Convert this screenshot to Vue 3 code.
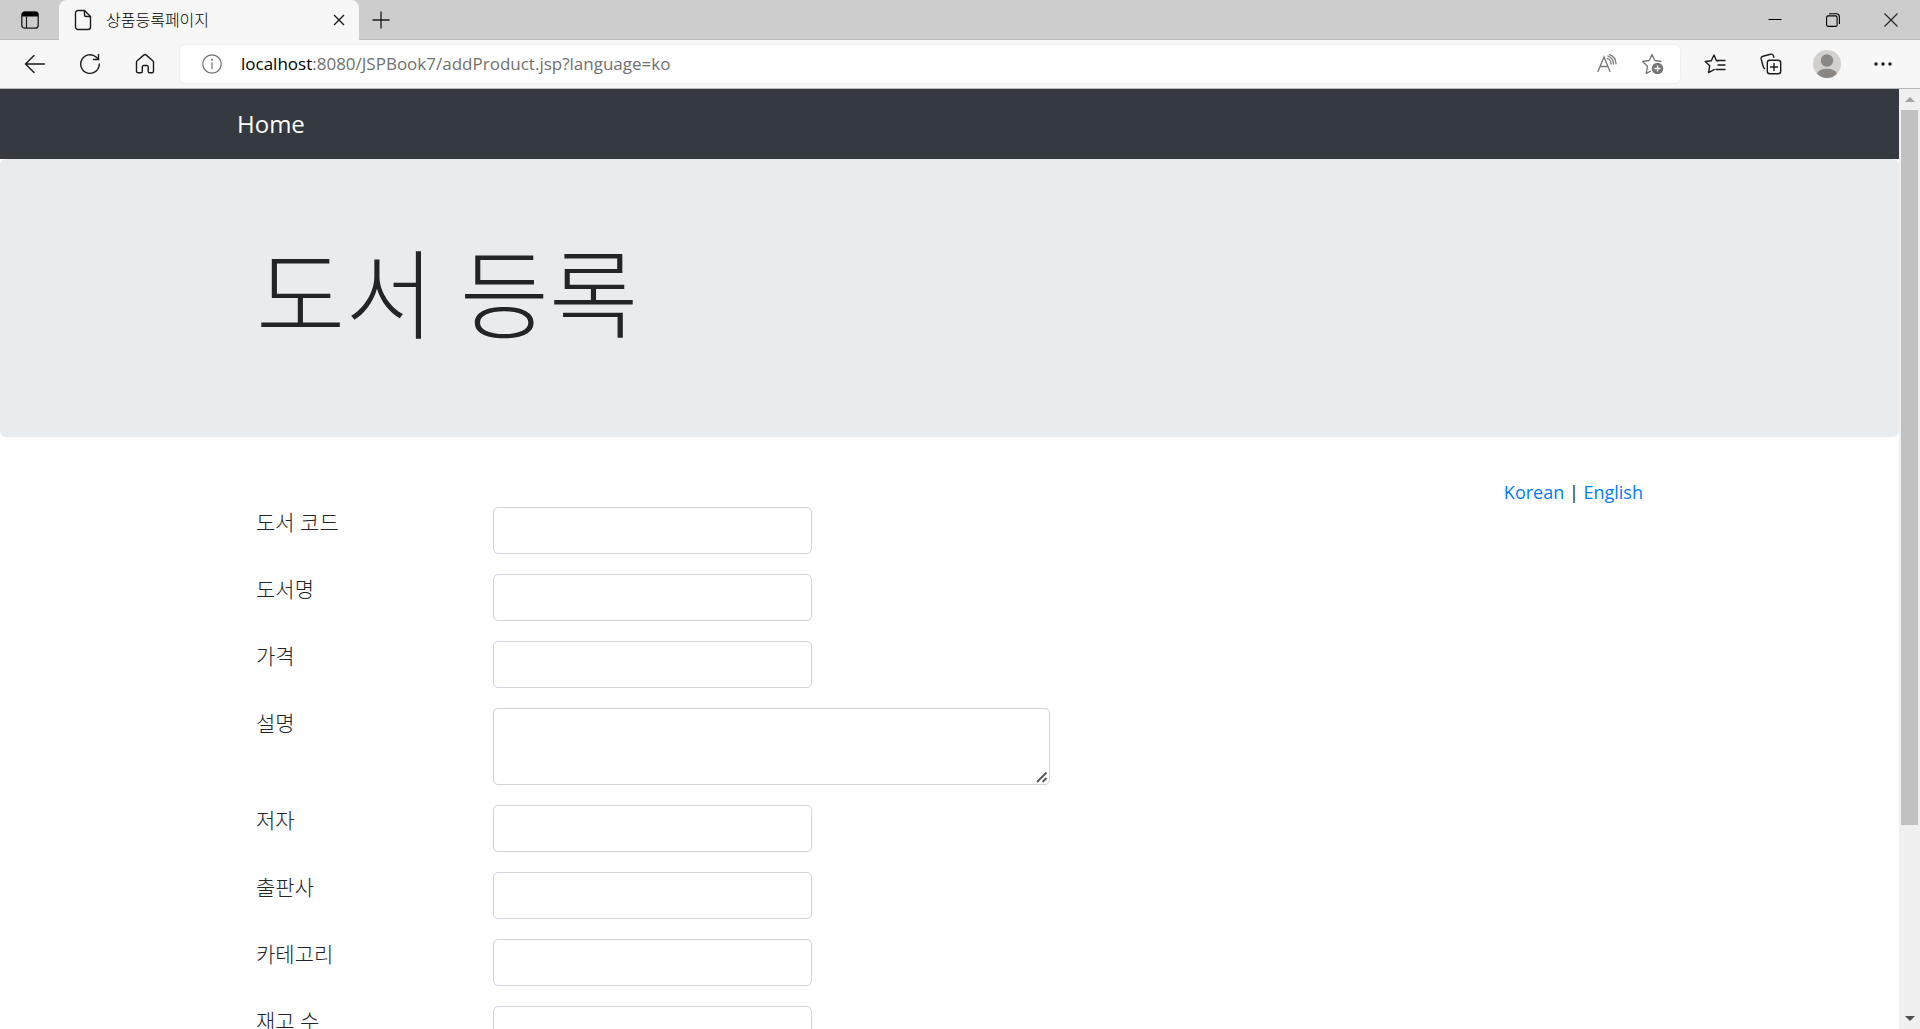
<template>
  <div class="browser">
    <header class="chrome">
      <div class="tab-strip">
        <button type="button" class="icon-btn tab-menu" aria-label="탭 작업 메뉴">
          <svg width="20" height="20" viewBox="0 0 20 20" fill="none" stroke="#1b1b1b">
            <rect x="1.8" y="2" width="16.4" height="16.2" rx="3" stroke-width="1.3" />
            <path d="M2 6.5V5a3 3 0 0 1 3-3h10a3 3 0 0 1 3 3v1.5z" fill="#000" stroke="none" />
            <path d="M6.5 6.5v11.5" stroke-width="1.2" />
          </svg>
        </button>
        <div class="tab">
          <svg width="18" height="22" viewBox="0 0 18 22" fill="none" stroke="#1b1b1b" stroke-width="1.4" stroke-linejoin="round">
            <path d="M4 1.5h6.5l6 6V18a2.500 2.500 0 0 1-2.500 2.500H4A2.500 2.500 0 0 1 1.500 18V4A2.500 2.500 0 0 1 4 1.500z" />
            <path d="M10.500 1.500V6a1.500 1.500 0 0 0 1.500 1.500h4.500" />
          </svg>
          <span class="tab-title">상품등록페이지</span>
          <button type="button" class="icon-btn tab-close" aria-label="탭 닫기">
            <svg width="12" height="12" viewBox="0 0 12 12" stroke="#1b1b1b" stroke-width="1.4">
              <path d="M1 1l10 10M11 1L1 11" />
            </svg>
          </button>
        </div>
        <button type="button" class="icon-btn new-tab" aria-label="새 탭">
          <svg width="18" height="18" viewBox="0 0 18 18" stroke="#1b1b1b" stroke-width="1.3">
            <path d="M9 0.5v17M0.5 9h17" />
          </svg>
        </button>
        <div class="window-controls">
          <button type="button" class="icon-btn" aria-label="최소화">
            <svg width="14" height="14" viewBox="0 0 14 14" stroke="#000">
              <path d="M0.5 6.5h13" />
            </svg>
          </button>
          <button type="button" class="icon-btn" aria-label="이전 크기로 복원">
            <svg width="14" height="14" viewBox="0 0 14 14" fill="none" stroke="#000" stroke-width="1.1">
              <rect x="0.6" y="2.9" width="10.5" height="10.5" rx="1.5" />
              <path d="M3 0.7h7.5a3 3 0 0 1 2.9 2.9V11" />
            </svg>
          </button>
          <button type="button" class="icon-btn" aria-label="닫기">
            <svg width="14" height="14" viewBox="0 0 14 14" stroke="#222" stroke-width="1.1">
              <path d="M0.5 0.5l13 13M13.5 0.5l-13 13" />
            </svg>
          </button>
        </div>
      </div>

      <div class="toolbar">
        <div class="nav-buttons">
          <button type="button" class="icon-btn" aria-label="뒤로">
            <svg width="22" height="20" viewBox="0 0 22 20" fill="none" stroke="#1b1b1b" stroke-width="1.4" stroke-linecap="round">
              <path d="M10 1.5L1.5 10l8.5 8.5M1.5 10h19" />
            </svg>
          </button>
          <button type="button" class="icon-btn" aria-label="새로 고침">
            <svg width="22" height="22" viewBox="0 0 22 22" fill="none" stroke="#1b1b1b" stroke-width="1.4" stroke-linecap="round">
              <path d="M20.3 11a9.3 9.3 0 1 1-2.9-6.700l2.1 2" />
              <path d="M19.5 1.5v5h-5" />
            </svg>
          </button>
          <button type="button" class="icon-btn" aria-label="홈">
            <svg width="20" height="22" viewBox="0 0 20 22" fill="none" stroke="#1b1b1b" stroke-width="1.4" stroke-linejoin="round">
              <path d="M1.5 9.3a2 2 0 0 1 .7-1.5l6.5-5.7a2 2 0 0 1 2.600 0l6.5 5.7a2 2 0 0 1 .7 1.5v8.900a1.5 1.5 0 0 1-1.5 1.5h-2.500a1.300 1.300 0 0 1-1.300-1.300v-4.600a1.300 1.300 0 0 0-1.300-1.300H8.600a1.300 1.300 0 0 0-1.300 1.300v4.600A1.300 1.300 0 0 1 6 19.700H3a1.500 1.500 0 0 1-1.500-1.500z" />
            </svg>
          </button>
        </div>

        <div class="address-bar">
          <svg width="20" height="20" viewBox="0 0 20 20" fill="none" stroke="#707070" stroke-width="1.2">
            <circle cx="10" cy="10" r="9.2" />
            <path d="M10 8.5v6.5" />
            <circle cx="10" cy="5.8" r="1" fill="#707070" stroke="none" />
          </svg>
          <span class="url"><b>localhost</b>:8080/JSPBook7/addProduct.jsp?language=ko</span>
          <button type="button" class="icon-btn" aria-label="소리내어 읽기">
            <svg width="20" height="20" viewBox="0 0 20 20" fill="none" stroke="#757575" stroke-width="1.3" stroke-linecap="round">
              <path d="M1 17.5L7 3l6 14.5M3 12.5h8" />
              <path d="M10.5 4.5a6 6 0 0 1 3.500 5.500M11 2a9 9 0 0 1 5.500 8M12.500 .7a10 10 0 0 1 6.500 9" />
            </svg>
          </button>
          <button type="button" class="icon-btn" aria-label="즐겨찾기에 추가">
            <svg width="23" height="22" viewBox="0 0 23 22" fill="none" stroke="#757575" stroke-width="1.3" stroke-linejoin="round">
              <path d="M20.5 8.5l-6.700-1L11 1.5l-2.800 6-6.700 1 5 4.800-1.300 7L10 18" />
              <circle cx="16.5" cy="15.5" r="5.8" fill="#757575" stroke="none" />
              <path d="M16.5 12.5v6M13.5 15.5h6" stroke="#fff" />
            </svg>
          </button>
        </div>

        <div class="tool-buttons">
          <button type="button" class="icon-btn" aria-label="즐겨찾기">
            <svg width="22" height="20" viewBox="0 0 22 20" fill="none" stroke="#1b1b1b" stroke-width="1.4" stroke-linejoin="round" stroke-linecap="round">
              <path d="M13.5 6.900l-1-.2L10 1 7.3 6.700 1.2 7.500l4.500 4.300-1.200 6.800 5.700-3" />
              <path d="M13.5 6.5H21M14 11h7M12 15.500h9" />
            </svg>
          </button>
          <button type="button" class="icon-btn" aria-label="컬렉션">
            <svg width="22" height="22" viewBox="0 0 22 22" fill="none" stroke="#1b1b1b" stroke-width="1.4" stroke-linecap="round">
              <rect x="7.3" y="7.3" width="13.4" height="13.4" rx="2.5" />
              <path d="M14 10.5v7M10.5 14h7" />
              <path d="M4.5 15.5A3 3 0 0 1 3.3 13.8L1.2 6.2a2.5 2.5 0 0 1 1.8-3L10.5 1.2a2.5 2.5 0 0 1 3 1.8l.3 1.2" />
            </svg>
          </button>
          <button type="button" class="icon-btn" aria-label="프로필">
            <svg width="28" height="28" viewBox="0 0 28 28">
              <circle cx="14" cy="14" r="14" fill="#d2d0ce" />
              <circle cx="14" cy="10.5" r="6.2" fill="#8a8784" />
              <path d="M4 23.7a10.5 7 0 0 1 20 0A14 14 0 0 1 4 23.7z" fill="#8a8784" />
            </svg>
          </button>
          <button type="button" class="icon-btn" aria-label="설정 및 기타">
            <svg width="18" height="4" viewBox="0 0 18 4" fill="#1b1b1b">
              <circle cx="2" cy="2" r="1.7" />
              <circle cx="9" cy="2" r="1.7" />
              <circle cx="16" cy="2" r="1.7" />
            </svg>
          </button>
        </div>
      </div>
    </header>

    <div class="viewport">
      <main class="page">
        <nav class="navbar">
          <div class="container">
            <a class="navbar-brand" href="#">Home</a>
          </div>
        </nav>

        <div class="jumbotron">
          <div class="container">
            <h1 class="display-3">도서 등록</h1>
          </div>
        </div>

        <div class="container content">
          <div class="languages">
            <a href="#ko">Korean</a> | <a href="#en">English</a>
          </div>
          <form @submit.prevent>
            <div v-for="field in fields" :key="field.id" class="form-row">
              <label :for="field.id">{{ field.label }}</label>
              <div v-if="field.multiline" class="textarea-wrap">
                <textarea :id="field.id" v-model="product[field.id]" class="form-control" rows="2"></textarea>
                <svg class="grip" width="12" height="12" viewBox="0 0 12 12" stroke="#555" stroke-width="1.8">
                  <path d="M1 11L10.500 1.500M6.500 11L10.500 7" />
                </svg>
              </div>
              <input v-else :id="field.id" v-model="product[field.id]" type="text" class="form-control" />
            </div>
          </form>
        </div>
      </main>

      <div class="scrollbar" aria-hidden="true">
        <span class="arrow up"></span>
        <div class="track"><div class="thumb"></div></div>
        <span class="arrow down"></span>
      </div>
    </div>
  </div>
</template>

<script setup>
import { reactive } from 'vue'

const fields = [
  { id: 'productId', label: '도서 코드' },
  { id: 'name', label: '도서명' },
  { id: 'unitPrice', label: '가격' },
  { id: 'description', label: '설명', multiline: true },
  { id: 'author', label: '저자' },
  { id: 'publisher', label: '출판사' },
  { id: 'category', label: '카테고리' },
  { id: 'unitsInStock', label: '재고 수' },
]

const product = reactive({
  productId: '',
  name: '',
  unitPrice: '',
  description: '',
  author: '',
  publisher: '',
  category: '',
  unitsInStock: '',
})
</script>

<style>
body {
  margin: 0;
}
</style>

<style scoped>
.browser {
  display: flex;
  flex-direction: column;
  height: 100vh;
  overflow: hidden;
  background: #fff;
  color: #212529;
  font-family: 'Open Sans', 'Noto Sans CJK KR', sans-serif;
}

.browser *,
.browser *::before,
.browser *::after {
  box-sizing: border-box;
}

svg {
  display: block;
  flex: none;
}

.icon-btn {
  display: grid;
  place-items: center;
  flex: none;
  border: 0;
  padding: 0;
  background: none;
  cursor: pointer;
}

/* browser frame */
.chrome {
  flex: none;
  background: #f7f7f7;
  border-bottom: 1px solid #b8b8b8;
}

.tab-strip {
  display: flex;
  height: 40px;
  background: #cdcdcd;
  box-shadow: inset 0 -1px #bdbdbd;
}

.tab-menu {
  width: 59px;
}

.tab {
  display: flex;
  align-items: center;
  gap: 14px;
  width: 300px;
  padding: 0 12px 0 15px;
  background: #f7f7f7;
  border-radius: 8px 8px 0 0;
}

.tab-title {
  flex: 1;
  padding-bottom: 3px;
  color: #000;
  font-family: 'Noto Sans CJK KR', sans-serif;
  font-size: 16px;
  line-height: 20px;
  font-weight: 300;
}

.tab-close {
  width: 16px;
  height: 16px;
}

.new-tab {
  width: 43px;
}

.window-controls {
  display: flex;
  margin-left: auto;
}

.window-controls .icon-btn {
  width: 58px;
}

.toolbar {
  display: flex;
  align-items: center;
  height: 48px;
}

.nav-buttons {
  display: flex;
  padding-left: 7px;
}

.nav-buttons .icon-btn {
  width: 55px;
  height: 38px;
}

.address-bar {
  display: flex;
  align-items: center;
  flex: 1;
  height: 38px;
  margin-left: 8px;
  padding: 0 14px 0 22px;
  background: #fff;
  border-radius: 5px;
  box-shadow: 0 0 2px #ddd;
}

.address-bar .icon-btn {
  width: 28px;
  height: 28px;
}

.address-bar .icon-btn + .icon-btn {
  margin-left: 17px;
}

.url {
  flex: 1;
  margin-left: 19px;
  color: #707070;
  font-size: 17px;
  line-height: 24px;
}

.url b {
  color: #000;
  font-weight: 400;
}

.tool-buttons {
  display: flex;
  padding-left: 7px;
  padding-right: 9px;
}

.tool-buttons .icon-btn {
  width: 56px;
  height: 38px;
}

/* page */
.viewport {
  display: flex;
  flex: 1;
  min-height: 0;
}

.page {
  flex: 1;
  min-width: 0;
  overflow: hidden;
  font-size: 21px;
  line-height: 30px;
}

.container {
  width: 100%;
  max-width: 1425px;
  margin: 0 auto;
  padding: 0 19px;
}

.navbar {
  padding: 10px 0;
  background: #343a40;
}

.navbar .container {
  padding: 0;
}

.navbar-brand {
  display: block;
  width: fit-content;
  padding: 6px 0;
  color: #fff;
  font-size: 24px;
  line-height: 38px;
  text-decoration: none;
}

.jumbotron {
  margin-bottom: 40px;
  padding: 80px 0;
  background: #e9ecef;
  border-radius: 6px;
}

.display-3 {
  margin: 0 0 10px;
  font-size: 97px;
  line-height: 108px;
  font-weight: 300;
}

.languages {
  font-size: 18px;
  text-align: right;
}

.languages a {
  color: #007bff;
  text-decoration: none;
}

.form-row {
  display: grid;
  grid-template-columns: 200px 319px;
  column-gap: 37px;
  align-items: start;
  margin-bottom: 20px;
}

.form-row label {
  font-weight: 300;
}

.form-control {
  display: block;
  width: 100%;
  height: 47px;
  padding: 7px 15px;
  border: 1px solid #ced4da;
  border-radius: 5px;
  background: #fff;
  color: #495057;
  font: inherit;
  outline: none;
}

.form-control:focus {
  border-color: #80bdff;
}

.form-row:has(textarea) {
  grid-template-columns: 200px 557px;
}

.textarea-wrap {
  position: relative;
}

textarea.form-control {
  height: 77px;
  resize: none;
}

.grip {
  position: absolute;
  right: 2px;
  bottom: 2px;
  pointer-events: none;
}

.scrollbar {
  display: flex;
  flex-direction: column;
  flex: none;
  width: 21px;
  background: #f0f0f0;
}

.track {
  flex: 1;
  padding: 0 2px;
}

.thumb {
  height: calc(80% - 3px);
  background: #c1c1c1;
}

.arrow {
  display: grid;
  place-items: center;
  height: 21px;
}

.arrow::before {
  content: '';
  border: 5px solid transparent;
}

.arrow.up::before {
  border-top: 0;
  border-bottom-color: #a3a3a3;
}

.arrow.down::before {
  border-bottom: 0;
  border-top-color: #505050;
}
</style>
